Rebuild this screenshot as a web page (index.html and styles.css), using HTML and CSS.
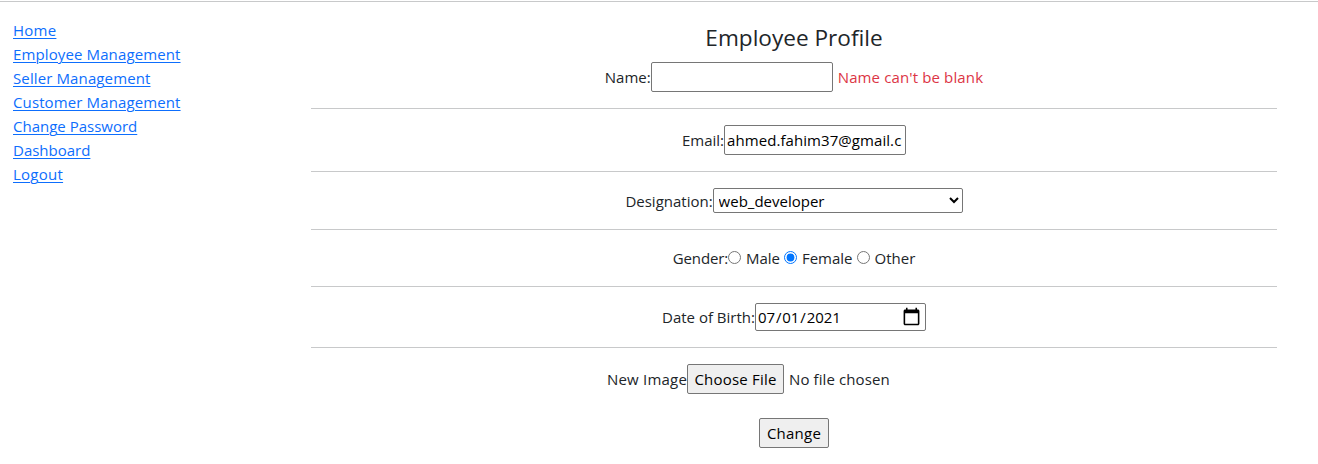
FILE: index.html
```html
<!DOCTYPE html>
<html lang="en">
<head>
<meta charset="utf-8">
<title>Employee Profile</title>
<link rel="stylesheet" href="styles.css">
</head>
<body>
<hr class="top-rule">
<div class="layout">
  <nav class="menu">
    <a href="#" class="wide">Home</a>
    <a href="#">Employee Management</a>
    <a href="#">Seller Management</a>
    <a href="#">Customer Management</a>
    <a href="#" class="plain">Change Password</a>
    <a href="#" class="plain">Dashboard</a>
    <a href="#" class="wide">Logout</a>
  </nav>
  <form class="profile">
    <h4 class="title">Employee Profile</h4>
    <div class="row name-row"><label for="name">Name:</label><input class="text" id="name" type="text"><span class="error">Name can't be blank</span></div>
    <hr>
    <div class="row text-row"><label for="email">Email:</label><input class="text" id="email" type="text" value="ahmed.fahim37@gmail.com"></div>
    <hr>
    <div class="row select-row"><label for="designation">Designation:</label><select id="designation"><option>web_developer</option></select></div>
    <hr>
    <div class="row gender-row"><span class="gender">Gender:</span><input type="radio" name="gender" id="m"><label class="male" for="m">Male</label><input type="radio" name="gender" id="f" checked><label class="female" for="f">Female</label><input type="radio" name="gender" id="o"><label for="o">Other</label></div>
    <hr>
    <div class="row date-row"><label for="dob">Date of Birth:</label><input id="dob" type="date" value="2021-07-01"></div>
    <hr>
    <div class="row file-row"><label for="image">New Image</label><input id="image" type="file"></div>
    <div class="row submit-row"><button type="button">Change</button></div>
  </form>
</div>
</body>
</html>
```
FILE: styles.css
```css
* { box-sizing: border-box; }
body {
  margin: 0;
  padding-top: 1px;
  background: #fff;
  color: #212529;
  font: 15px/24px "Segoe UI", "Open Sans", "Noto Sans", sans-serif;
  overflow: hidden;
}
hr { margin: 16px 0; border: 0; height: 1px; background: #c8c9ca; }
.top-rule { margin: 0; }
.layout { display: flex; padding-top: 16px; }
.menu {
  display: flex;
  flex-direction: column;
  align-items: flex-start;
  width: 311px;
  padding-left: 13px;
}
.menu a {
  color: #0d6efd;
  letter-spacing: 0.12px;
  text-decoration: underline;
  text-decoration-thickness: 1px;
  text-underline-offset: 2px;
}
.menu .wide { letter-spacing: 0.25px; }
.menu .plain { letter-spacing: 0; }
.profile { width: 966px; }
.title { margin: 5px 0 10px; font-size: 22.6px; font-weight: 400; line-height: 29px; text-align: center; }
.row { display: flex; justify-content: center; align-items: center; }
.row input, .row select, button { margin: 0; font: inherit; color: #000; }
.name-row, .text-row, .file-row { height: 30px; }
.text, #dob, .row select { border: 1px solid #767676; border-radius: 2px; background: #fff; }
.text { width: 182px; height: 30px; padding: 1px 2px; }
#email { padding-right: 3px; letter-spacing: 0.07px; }
.error { margin-left: 5px; color: #dc3545; letter-spacing: 0.13px; }
.row select { width: 250px; height: 25px; padding: 0 0 0 1px; }
.gender-row { height: 24px; }
.gender { letter-spacing: -0.1px; }
.gender-row input { width: 13px; height: 13px; margin-bottom: 2px; }
.gender-row label { margin-left: 4.7px; }
.gender-row .male, .gender-row .female { margin-right: 4.3px; }
#dob { width: 171px; height: 28px; padding: 1px 2px; letter-spacing: -0.1px; }
#dob::-webkit-datetime-edit-fields-wrapper { margin-left: -1px; }
#dob::-webkit-calendar-picker-indicator { width: 19px; height: 19px; padding: 0 0 1px; margin-right: 2px; background-size: 19px 19px; }
.file-row label { letter-spacing: 0.2px; }
#image { width: 294px; height: 30px; color: #212529; letter-spacing: 0.1px; }
#image::file-selector-button, button {
  height: 30px;
  padding: 1px 6px;
  border: 1px solid #767676;
  border-radius: 2px;
  background: #efefef;
  color: #000;
  font: inherit;
}
#image::file-selector-button { width: 97px; letter-spacing: 0.2px; margin-right: 5px; }
button { width: 70px; letter-spacing: 0.25px; }
.submit-row { margin-top: 24px; }
```
